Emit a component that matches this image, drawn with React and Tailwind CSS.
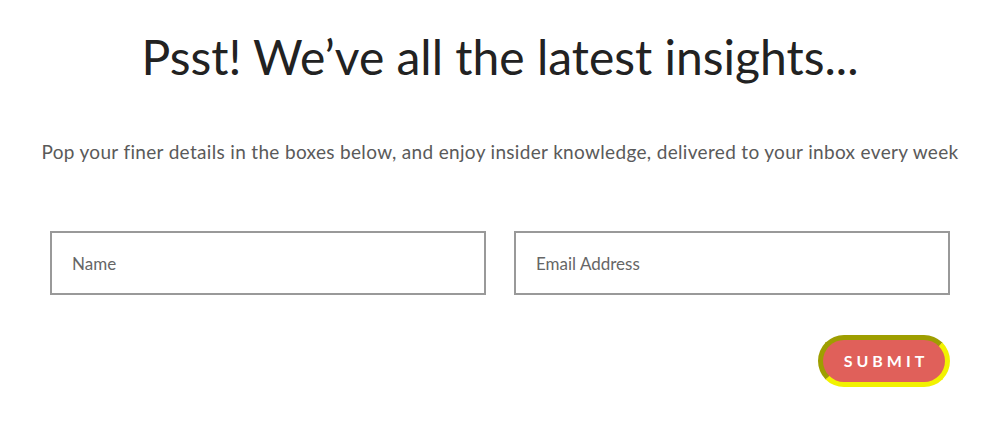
export default function App() {
  return (
    <div className="w-[1008px] h-[428px] bg-white">
      <div className="w-[1000px] flex flex-col items-center font-['Lato','Liberation_Sans',sans-serif]">
        <h1 className="mt-[25px] text-[48px] leading-[64px] font-normal text-[#222222]">
          Psst! We&#8217;ve all the latest insights...
        </h1>
        <p className="mt-[50px] text-[19px] leading-[26px] text-[#5a5a5a] tracking-[0.33px]">
          Pop your finer details in the boxes below, and enjoy insider knowledge, delivered to your inbox every week
        </p>
        <form className="mt-[66px] w-[900px] flex flex-col">
          <div className="flex gap-[28px]">
            <input
              type="text"
              placeholder="Name"
              className="flex-1 h-[64px] border-2 border-[#999999] px-[20px] text-[17px] text-[#555] placeholder:text-[#666666] outline-none"
            />
            <input
              type="email"
              placeholder="Email Address"
              className="flex-1 h-[64px] border-2 border-[#999999] px-[20px] text-[17px] text-[#555] placeholder:text-[#666666] outline-none"
            />
          </div>
          <div className="flex justify-end mt-[40px]">
            <button
              type="button"
              className="w-[132px] h-[52px] rounded-full border-[5px] border-[#f2f200] [border-style:inset] bg-[#e0605a] text-white text-[16px] font-bold tracking-[4px] pl-[4px]"
            >
              SUBMIT
            </button>
          </div>
        </form>
      </div>
    </div>
  );
}
